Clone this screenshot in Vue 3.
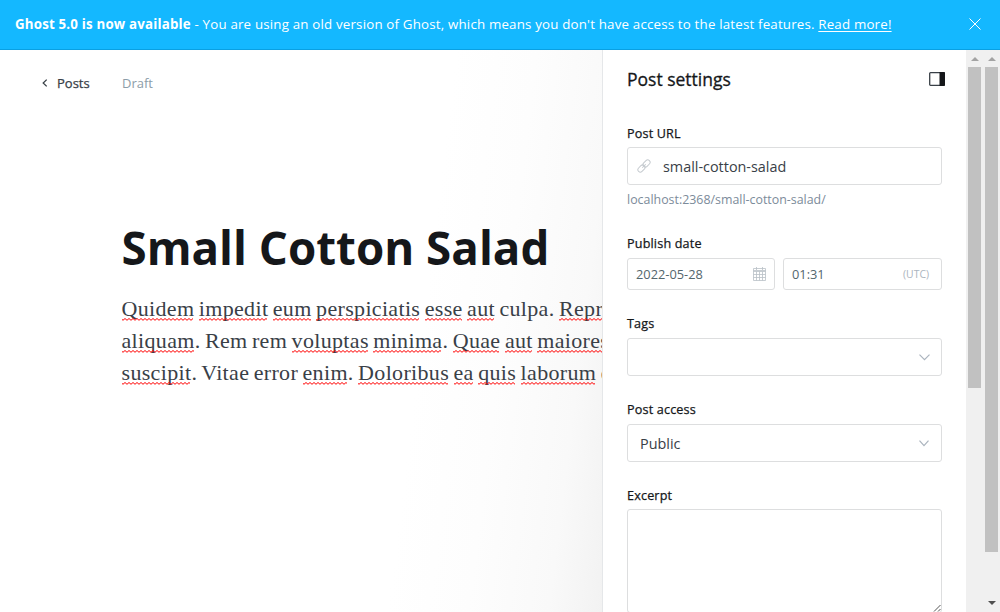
<script setup>
const lines = [
  [['Quidem', 1], ['impedit', 1], ['eum', 1], ['perspiciatis', 1], ['esse', 1], ['aut', 1], ['culpa.', 0], ['Repr', 1]],
  [['aliquam', 1, '.'], ['Rem', 0], ['rem', 0], ['voluptas', 1], ['minima', 1, '.'], ['Quae', 1], ['aut', 1], ['maiores', 1]],
  [['suscipit', 1, '.'], ['Vitae', 0], ['error', 0], ['enim', 1, '.'], ['Doloribus', 1], ['ea', 1], ['quis', 1], ['laborum', 1], ['e', 0]],
]
</script>

<template>
  <div class="app">
    <header class="banner">
      <p><b>Ghost 5.0 is now available</b><span class="msg"> - You are using an old version of Ghost, which means you don't have access to the latest features. <a>Read more!</a></span></p>
      <svg class="close" width="12" height="12" viewBox="0 0 12 12"><path d="M.5.5l11 11M11.5.5l-11 11" /></svg>
    </header>
    <div class="body">
      <main class="editor">
        <nav class="crumbs">
          <svg width="6" height="8" viewBox="0 0 6 8"><path d="M4.7.6L1.2 4l3.5 3.4" /></svg>
          <span class="posts">Posts</span>
          <span class="draft">Draft</span>
        </nav>
        <h1>Small Cotton Salad</h1>
        <div class="copy">
          <p v-for="(line, i) in lines" :key="i" class="line">
            <template v-for="(w, j) in line" :key="j"><span :class="{ err: w[1] }">{{ w[0] }}</span>{{ (w[2] || '') + ' ' }}</template>
          </p>
        </div>
      </main>
      <aside class="settings">
        <div class="head">
          <h2>Post settings</h2>
          <svg width="16" height="14" viewBox="0 0 16 14"><rect x=".7" y=".7" width="14.6" height="12.6" rx=".8" /><path d="M10.5 0H15a1 1 0 0 1 1 1v12a1 1 0 0 1-1 1h-4.500z" /></svg>
        </div>
        <label class="t-url">Post URL</label>
        <div class="field url">
          <svg width="14" height="14" viewBox="0 0 14 14"><g transform="rotate(-45 7 7)"><rect x="-.6" y="4.600" width="8" height="4.800" rx="2.400" /><rect x="6.600" y="4.600" width="8" height="4.800" rx="2.400" /><path d="M4.500 7h5" /></g></svg>
          <span>small-cotton-salad</span>
        </div>
        <p class="hint">localhost:2368/small-cotton-salad/</p>
        <label class="t-date">Publish date</label>
        <div class="dates">
          <div class="field date"><span>2022-05-28</span>
            <svg width="13" height="14" viewBox="0 0 13 14"><path d="M.5 1.500h12v12H.5zM.5 3.500h12M.5 4.500h12M3.500 4.500v9M6.500 4.500v9M9.500 4.500v9M.5 7.500h12M.5 10.500h12M3.500 0v3M9.500 0v3" /></svg>
          </div>
          <div class="field time"><span>01:31</span><small>(UTC)</small></div>
        </div>
        <label class="t-tags">Tags</label>
        <div class="field pick"><span></span><svg width="11" height="7" viewBox="0 0 11 7"><path d="M.5.7l5 5 5-5" /></svg></div>
        <label class="t-access">Post access</label>
        <div class="field pick"><span>Public</span><svg width="11" height="7" viewBox="0 0 11 7"><path d="M.5.7l4.500 5 4.500-5" /></svg></div>
        <label class="t-excerpt">Excerpt</label>
        <div class="field area"><svg width="8" height="8" viewBox="0 0 8 8"><path d="M1 7.500L7.500 1M5 7.500L7.500 5" /></svg></div>
      </aside>
      <div class="bar inner"><i class="up"></i><div class="thumb"></div></div>
      <div class="bar outer"><i class="up"></i><div class="thumb"></div><i class="down"></i></div>
    </div>
  </div>
</template>

<style>
body { overflow: hidden; background: #fff; }
</style>

<style scoped>
* { box-sizing: border-box; }
.app { width: 1000px; height: 612px; overflow: hidden; display: flex; flex-direction: column; font-family: "Open Sans", "Noto Sans", sans-serif; color: #15171a; }
p, h1, h2 { margin: 0; }
svg { fill: none; flex: none; display: block; }
.banner { height: 50px; flex: none; background: #14b8ff; border-bottom: 1px solid #0aa0e2; color: #fff; padding: 0 19px 0 15px; display: flex; align-items: center; justify-content: space-between; }
.banner p { font-size: 13.300px; letter-spacing: .19px; line-height: 20px; white-space: pre; padding-bottom: 2px; }
.banner b { font-weight: 700; }
.banner a { text-decoration: underline; text-underline-offset: 2px; }
.close { margin-bottom: 2px; }
.close path { stroke: #fff; stroke-width: 1; }
.body { flex: 1; min-height: 0; display: flex; }
.editor { width: 602px; flex: none; overflow: hidden; background: linear-gradient(97deg, #fff 68%, #fdfdfd 80%, #f9f9f9 92%, #f2f2f2 100%); }
.crumbs { height: 20px; margin: 23px 0 0 42px; display: flex; align-items: center; font-size: 13px; line-height: 20px; }
.crumbs path { stroke: #394047; stroke-width: 1.300; }
.posts { -webkit-text-stroke: .25px; color: #394047; margin-left: 9px; width: 65px; }
.draft { color: #8c9da8; }
h1 { font-size: 45.700px; line-height: 54px; font-weight: 700; margin: 127px 0 0 121.500px; white-space: nowrap; }
.copy { margin: 19px 0 0 121.500px; font-family: "Liberation Serif", serif; font-size: 22px; letter-spacing: .33px; word-spacing: -1.400px; line-height: 32px; color: #394047; white-space: nowrap; }
.line { height: 32px; }
.err { position: relative; }
.err::after { content: ""; position: absolute; left: 0; right: 1px; bottom: 0; height: 3px; background: repeat-x url("data:image/svg+xml,%3Csvg xmlns='http://www.w3.org/2000/svg' width='4' height='3'%3E%3Cpath d='M-1 .5L1 2.300 3 .5 5 2.300' fill='none' stroke='red' stroke-width='1'/%3E%3C/svg%3E"); }
.settings { width: 364px; flex: none; overflow: hidden; border-left: 1px solid #e5e7e9; padding: 0 24px; display: flex; flex-direction: column; background: #fff; }
.head { height: 20px; margin-top: 19px; display: flex; justify-content: space-between; padding-right: 3px; flex: none; align-items: center; margin-right: -6px; }
.head h2 { font-size: 17.500px; line-height: 22px; font-weight: 400; -webkit-text-stroke: .3px; }
.head rect { stroke: #394047; stroke-width: 1.300; }
.head path { fill: #15171a; }
label { font-size: 12.600px; letter-spacing: .17px; line-height: 18px; height: 18px; -webkit-text-stroke: .25px; flex: none; }
.t-url { margin: 36px 0 4px; }
.field { height: 38px; flex: none; border: 1px solid #dddedf; border-radius: 3px; display: flex; align-items: center; color: #394047; font-size: 14.400px; background: #fff; }
.url { padding-left: 9px; gap: 12px; }
.url svg rect, .url path { stroke: #c5cacf; stroke-width: 1; }
.hint { font-size: 12.400px; line-height: 18px; color: #7c8b9a; margin-top: 6px; }
.t-date { margin: 26px 0 5px; }
.dates { display: flex; gap: 8px; }
.dates .field { height: 32px; font-size: 12.800px; justify-content: space-between; color: #54666d; }
.date { width: 148px; padding: 0 8px; }
.date path { stroke: #b9c0c6; stroke-width: .8; }
.time { flex: 1; padding: 0 12px 0 8px; }
.time small { font-size: 10.400px; color: #abb4be; }
.t-tags { margin: 25px 0 5px; }
.pick { justify-content: space-between; padding: 0 11px 0 12px; }
.pick path { stroke: #abb4be; stroke-width: 1.200; }
.t-access { margin: 25px 0 5px; }
.t-excerpt { margin: 25px 0 4px; }
.area { height: 104px; align-items: flex-end; justify-content: flex-end; }
.area path { stroke: #555; stroke-width: 1; }
.bar { width: 17px; flex: none; background: #f0f0f0; display: flex; flex-direction: column; align-items: center; }
.thumb { width: 13px; background: #c1c1c1; }
.inner .thumb { height: 321px; }
.outer .thumb { height: 485px; }
.up { border: 4px solid transparent; border-top: 0; border-bottom: 4px solid #a3a3a3; margin: 7px 0 6px; }
.down { border: 4px solid transparent; border-bottom: 0; border-top: 4px solid #505050; margin-top: 49px; }
</style>
